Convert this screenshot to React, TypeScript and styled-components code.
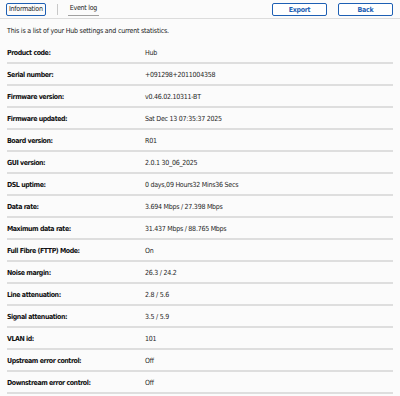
import React from "react";
import styled, { createGlobalStyle } from "styled-components";

const GlobalStyle = createGlobalStyle`
  html, body {
    margin: 0;
    padding: 0;
    background: #fbfbfb;
  }
  body {
    font-family: "DejaVu Sans Condensed", "Liberation Sans", sans-serif;
    color: #1a1a1a;
  }
`;

const rows: [string, string][] = [
  ["Product code:", "Hub"],
  ["Serial number:", "+091298+2011004358"],
  ["Firmware version:", "v0.46.02.10311-BT"],
  ["Firmware updated:", "Sat Dec 13 07:35:37 2025"],
  ["Board version:", "R01"],
  ["GUI version:", "2.0.1 30_06_2025"],
  ["DSL uptime:", "0 days,09 Hours32 Mins36 Secs"],
  ["Data rate:", "3.694 Mbps / 27.398 Mbps"],
  ["Maximum data rate:", "31.437 Mbps / 88.765 Mbps"],
  ["Full Fibre (FTTP) Mode:", "On"],
  ["Noise margin:", "26.3 / 24.2"],
  ["Line attenuation:", "2.8 / 5.6"],
  ["Signal attenuation:", "3.5 / 5.9"],
  ["VLAN id:", "101"],
  ["Upstream error control:", "Off"],
  ["Downstream error control:", "Off"],
];

function App() {
  return (
    <>
      <GlobalStyle />
      <Page>
        <Header>
          <Tab active>Information</Tab>
          <Divider />
          <Tab>Event log</Tab>
          <Actions>
            <ActionButton>Export</ActionButton>
            <ActionButton>Back</ActionButton>
          </Actions>
        </Header>
        <Content>
          <Intro>This is a list of your Hub settings and current statistics.</Intro>
          {rows.map(([label, value]) => (
            <Row key={label}>
              <Label>{label}</Label>
              <Value>{value}</Value>
            </Row>
          ))}
        </Content>
      </Page>
    </>
  );
}

const Page = styled.div`
  width: 400px;
  height: 396px;
  overflow: hidden;
`;

const Header = styled.div`
  display: flex;
  align-items: center;
  height: 19px;
  padding: 0 7px 0 6px;
  border-bottom: 1px solid #dcdcdc;
  box-sizing: border-box;
`;

const Tab = styled.div<{ active?: boolean }>`
  height: 13px;
  box-sizing: border-box;
  padding: 0 2px;
  font-size: 7px;
  letter-spacing: -0.25px;
  line-height: 10px;
  color: #1a1a1a;
  border: ${(p) => (p.active ? "1.5px solid #1d5fb4" : "none")};
  border-bottom: ${(p) => (p.active ? "1.5px solid #1d5fb4" : "1.5px solid #a0a0a0")};
  border-radius: ${(p) => (p.active ? "2px" : "0")};
  margin-top: 1px;
`;

const Divider = styled.div`
  width: 1px;
  height: 11px;
  background: #c8c8c8;
  margin: 0 10px 0 11px;
`;

const Actions = styled.div`
  margin-left: auto;
  display: flex;
  gap: 11px;
`;

const ActionButton = styled.button`
  width: 55px;
  height: 13px;
  padding: 0;
  box-sizing: border-box;
  border: 1.5px solid #1d5fb4;
  border-radius: 2px;
  background: #fff;
  color: #1d5fb4;
  font-family: inherit;
  font-weight: bold;
  font-size: 7px;
  letter-spacing: -0.3px;
  line-height: 10px;
  margin-top: 1px;
`;

const Content = styled.div`
  padding: 0 7px;
`;

const Intro = styled.div`
  font-size: 7px;
  letter-spacing: -0.2px;
  height: 23px;
  line-height: 24px;
  color: #1a1a1a;
`;

const Row = styled.div`
  display: flex;
  align-items: center;
  height: 22px;
  box-sizing: border-box;
  border-bottom: 2px solid #dedede;
  padding-top: 2px;
  font-size: 7px;
`;

const Label = styled.div`
  width: 138px;
  font-weight: bold;
  letter-spacing: -0.45px;
  color: #111;
`;

const Value = styled.div`
  letter-spacing: -0.25px;
  color: #262626;
`;

export default App;
